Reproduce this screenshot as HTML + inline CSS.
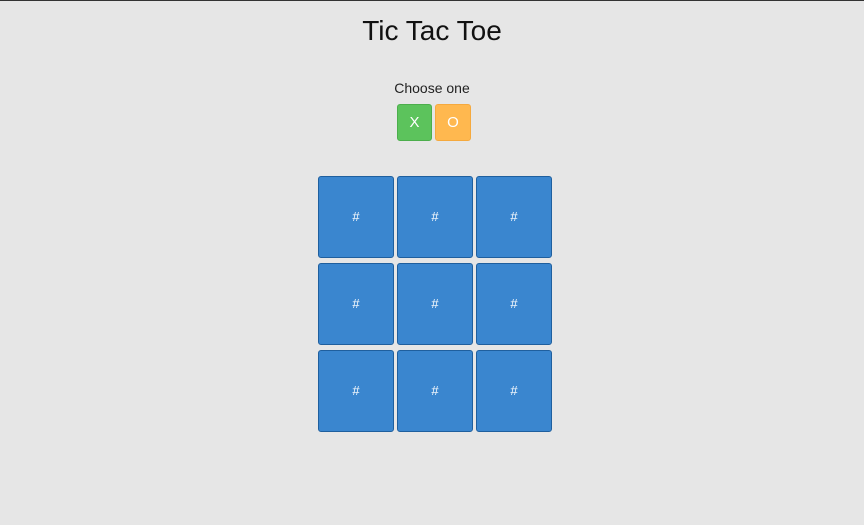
<!DOCTYPE html>
<html><head><style>
body{margin:0;width:864px;height:525px;background:#e6e6e6;font-family:"Liberation Sans",sans-serif;position:relative;overflow:hidden}
.top{position:absolute;top:0;left:0;width:864px;height:1px;background:#333}
h1{position:absolute;top:15px;left:0;width:864px;text-align:center;margin:0;font-size:28px;font-weight:normal;color:#111}
.c{position:absolute;top:80px;left:0;width:864px;text-align:center;font-size:14px;color:#222}
.b{position:absolute;top:104px;width:35px;height:37px;border-radius:3px;color:#fff;font-size:15px;line-height:35px;text-align:center;box-sizing:border-box}
.cell{position:absolute;width:76px;height:82px;background:#3a86cf;border:1px solid #1f5f9e;border-radius:3px;box-sizing:border-box;color:#fff;font-size:13px;text-align:center;line-height:80px}
</style></head><body>
<div class="top"></div>
<h1>Tic Tac Toe</h1>
<div class="c">Choose one</div>
<div class="b" style="left:397px;background:#5cc35c;border:1px solid #4cae4c">X</div>
<div class="b" style="left:435px;background:#ffb84f;border:1px solid #f5a93e;width:36px">O</div>
<div class="cell" style="left:318px;top:176px">#</div>
<div class="cell" style="left:397px;top:176px">#</div>
<div class="cell" style="left:476px;top:176px">#</div>
<div class="cell" style="left:318px;top:263px">#</div>
<div class="cell" style="left:397px;top:263px">#</div>
<div class="cell" style="left:476px;top:263px">#</div>
<div class="cell" style="left:318px;top:350px">#</div>
<div class="cell" style="left:397px;top:350px">#</div>
<div class="cell" style="left:476px;top:350px">#</div>
</body></html>
